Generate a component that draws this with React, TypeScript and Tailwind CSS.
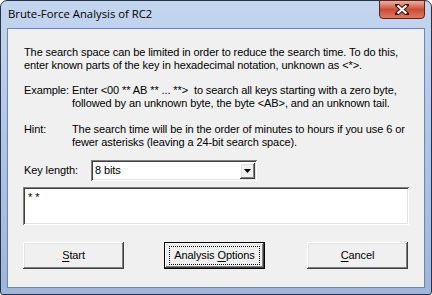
const raised =
  "shadow-[inset_-1px_-1px_#404040,inset_1px_1px_#ffffff,inset_-2px_-2px_#808080,inset_2px_2px_#e3e3e3]";
const sunken =
  "shadow-[inset_1px_1px_#808080,inset_-1px_-1px_#ffffff,inset_2px_2px_#404040,inset_-2px_-2px_#e3e3e3]";

function Btn({ pre, u, post, isDefault, cls }: { pre?: string; u: string; post: string; isDefault?: boolean; cls?: string }) {
  return (
    <div
      className={
        "w-[101px] h-[27px] bg-[#f0f0f0] flex items-center justify-center whitespace-nowrap " +
        (isDefault ? "border border-black " : "") +
        (cls ?? "") +
        " " +
        raised
      }
    >
      <div
        className={
          "flex items-center justify-center " +
          (isDefault ? "border border-dotted border-black h-[19px] w-[91px]" : "")
        }
      >
        <span>
          {pre}
          <span className="underline underline-offset-2">{u}</span>
          {post}
        </span>
      </div>
    </div>
  );
}

export default function App() {
  return (
    <div className="w-[432px] h-[295px] bg-white">
      <div className="w-[432px] h-[295px] rounded-t-[7px] rounded-b-[3px] border border-[#27324a] bg-gradient-to-b from-[#c4d6ee] via-[#aec5e6] to-[#9db6db] flex flex-col">
        <div className="h-[27px] flex items-start justify-between pl-[7px] pr-[6px]">
          <span className="mt-[5px] text-[11.3px] leading-[16px] text-black font-['Open_Sans',sans-serif]">
            Brute-Force Analysis of RC2
          </span>
          <div className="mt-[-1px] w-[46px] h-[19px] rounded-b-[4px] border border-[#5b2219] bg-gradient-to-b from-[#eab0a2] via-[#cc4a32] to-[#dc7a64] flex items-center justify-center">
            <svg width="14" height="11" viewBox="0 0 14 11">
              <path d="M2 1 L12 10 M12 1 L2 10" stroke="#3a1410" strokeWidth="4" strokeLinecap="square" />
              <path d="M2.5 1.5 L11.5 9.5 M11.5 1.5 L2.5 9.5" stroke="#ffffff" strokeWidth="2.2" />
            </svg>
          </div>
        </div>
        <div className="flex-1 mx-[6px] mb-[6px] border border-[#6f86ac] bg-[#f0f0f0] px-[15px] pt-[17px] text-[11px] leading-[13px] tracking-[-0.1px] text-black font-['Liberation_Sans',Arial,sans-serif] flex flex-col whitespace-nowrap">
          <p className="ml-[1px]">
            The search space can be limited in order to reduce the search time. To do this,
            <br />
            enter known parts of the key in hexadecimal notation, unknown as &lt;*&gt;.
          </p>
          <div className="ml-[1px] mt-[12px] flex">
            <span className="w-[48px] shrink-0">Example:</span>
            <p>
              Enter &lt;00 ** AB ** ... **&gt;&nbsp; to search all keys starting with a zero byte,
              <br />
              followed by an unknown byte, the byte &lt;AB&gt;, and an unknown tail.
            </p>
          </div>
          <div className="ml-[1px] mt-[13px] flex">
            <span className="w-[48px] shrink-0">Hint:</span>
            <p>
              The search time will be in the order of minutes to hours if you use 6 or
              <br />
              fewer asterisks (leaving a 24-bit search space).
            </p>
          </div>
          <div className="mt-[11px] flex items-center">
            <span className="ml-[1px] w-[67px]">Key length:</span>
            <div className={"w-[166px] h-[21px] bg-white flex items-center pl-[4px] pr-[2px] " + sunken}>
              <span className="flex-1">8 bits</span>
              <div className={"w-[15px] h-[16px] bg-[#f0f0f0] flex items-center justify-center " + raised}>
                <svg width="7" height="4" viewBox="0 0 7 4">
                  <path d="M0 0 H7 L3.5 4 Z" fill="#000" />
                </svg>
              </div>
            </div>
          </div>
          <div className={"mt-[6px] h-[38px] bg-white pl-[5px] pt-[4px] " + sunken}>* *</div>
          <div className="mt-[17px] flex">
            <Btn u="S" post="tart" />
            <Btn pre="Analysis " u="O" post="ptions" isDefault cls="ml-[40px]" />
            <Btn u="C" post="ancel" cls="ml-[42px]" />
          </div>
        </div>
      </div>
    </div>
  );
}
